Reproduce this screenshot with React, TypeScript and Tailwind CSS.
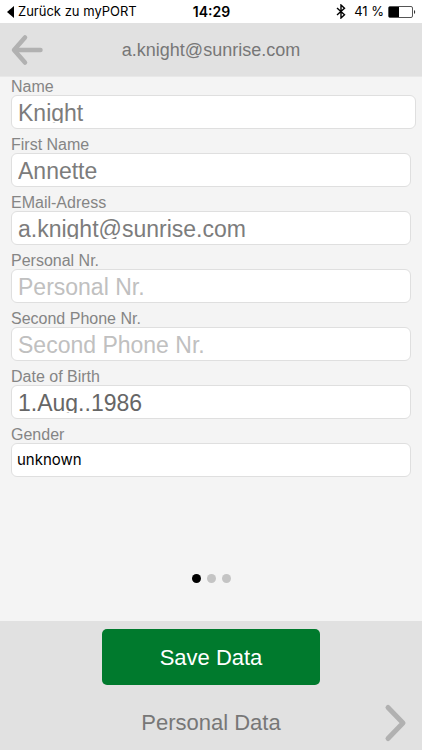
import { useState } from "react";
import { clsx } from "clsx";

type Field = {
  id: string;
  label: string;
  value: string;
  placeholder?: string;
  type?: string;
  wide?: boolean;
  dark?: boolean;
};

const FIELDS: Field[] = [
  { id: "name", label: "Name", value: "Knight", wide: true },
  { id: "firstName", label: "First Name", value: "Annette" },
  { id: "email", label: "EMail-Adress", value: "a.knight@sunrise.com", type: "email" },
  { id: "personalNr", label: "Personal Nr.", value: "", placeholder: "Personal Nr." },
  { id: "phone2", label: "Second Phone Nr.", value: "", placeholder: "Second Phone Nr.", type: "tel" },
  { id: "birth", label: "Date of Birth", value: "1.Aug..1986", dark: true },
];

function StatusBar() {
  return (
    <div className="grid grid-cols-[1fr_auto_1fr] items-center h-[23px] pl-[7px] pr-[6px] bg-white text-black text-[13px] font-['Inter','Roboto',sans-serif]">
      <button type="button" className="flex items-center gap-1 whitespace-nowrap">
        <svg width="7" height="12" viewBox="0 0 7 12" aria-hidden="true">
          <path d="M7 0v12L0 6z" fill="#000" />
        </svg>
        Zurück zu myPORT
      </button>
      <span className="text-sm font-semibold">14:29</span>
      <div className="flex items-center justify-end gap-1">
        <svg width="10" height="15" viewBox="0 0 10 15" fill="none" stroke="#000" strokeWidth="1.4" className="mr-1" aria-hidden="true">
          <path d="M1 4L8.5 10.8L5 14V1L8.5 4.2L1 11" />
        </svg>
        <span className="whitespace-nowrap">41 %</span>
        <svg width="28" height="12" viewBox="0 0 28 12" aria-hidden="true">
          <rect x="0.5" y="0.5" width="24" height="11" rx="1.5" fill="#fff" stroke="#555" />
          <rect x="1" y="1" width="10" height="10" fill="#000" />
          <path d="M26 4c1.6.6 1.6 3.4 0 4z" fill="#333" />
        </svg>
      </div>
    </div>
  );
}

function Header({ title }: { title: string }) {
  return (
    <header className="grid grid-cols-[34px_1fr_34px] items-center h-[54px] px-[10px] bg-[#e1e1e1] border-b border-[#e8e8e8]">
      <button type="button" aria-label="Back">
        <svg width="34" height="32" viewBox="0 0 34 32" fill="none" stroke="#b1b1b1" strokeWidth="4.5" strokeLinecap="round" strokeLinejoin="round">
          <path d="M15 3.5L4 16L15 28.5M4.5 16H30.5" />
        </svg>
      </button>
      <h1 className="text-center text-lg text-[#777]">{title}</h1>
    </header>
  );
}

function TextField({ field }: { field: Field }) {
  const [value, setValue] = useState(field.value);

  return (
    <div className={clsx("flex flex-col pl-[11px]", field.wide ? "pr-[6px]" : "pr-[11px]")}>
      <label htmlFor={field.id} className="h-[18px] text-base leading-[20px] text-[#858585]">
        {field.label}
      </label>
      {/* the input is shorter than its text, so descenders are cut */}
      <div className="flex items-start h-[34px] pt-[7px] px-[6px] rounded-md border border-[#dfdfdf] bg-white">
        <input
          id={field.id}
          type={field.type ?? "text"}
          value={value}
          placeholder={field.placeholder}
          onChange={(e) => setValue(e.target.value)}
          className={clsx(
            "w-full h-[20px] overflow-hidden outline-none text-[23px] leading-[20px] placeholder:text-[#c0c0c0]",
            field.dark ? "text-[#666]" : "text-[#7c7c7c]"
          )}
        />
      </div>
    </div>
  );
}

export default function App() {
  const [gender, setGender] = useState("unknown");

  return (
    <div className="flex flex-col min-h-screen bg-[#f4f4f4] font-['Liberation_Sans',Arial,sans-serif]">
      <StatusBar />
      <Header title="a.knight@sunrise.com" />

      <form id="personal" className="flex flex-col gap-[6px]" onSubmit={(e) => e.preventDefault()}>
        {FIELDS.map((field) => (
          <TextField key={field.id} field={field} />
        ))}
        <div className="flex flex-col px-[11px]">
          <label htmlFor="gender" className="h-[18px] text-base leading-[20px] text-[#858585]">
            Gender
          </label>
          <select
            id="gender"
            value={gender}
            onChange={(e) => setGender(e.target.value)}
            className="appearance-none w-full h-[34px] px-[5px] rounded-md border border-[#dfdfdf] bg-white text-[15px] text-black font-['Inter','Roboto',sans-serif]"
          >
            <option value="unknown">unknown</option>
            <option value="female">female</option>
            <option value="male">male</option>
          </select>
        </div>
      </form>

      {/* page dots */}
      <div className="flex justify-center gap-[6px] mt-auto pt-8 pb-[38px]">
        <span className="size-[9px] rounded-full bg-black" />
        <span className="size-[9px] rounded-full bg-[#c4c4c4]" />
        <span className="size-[9px] rounded-full bg-[#c4c4c4]" />
      </div>

      <footer className="flex flex-col items-center pt-2 bg-[#e1e1e1]">
        <button
          type="submit"
          form="personal"
          className="w-[218px] h-14 rounded-[5px] bg-[#007a2d] text-[22px] text-white"
        >
          Save Data
        </button>
        <div className="grid grid-cols-[28px_1fr_28px] items-center w-full h-[65px] pt-[10px] px-3">
          <span className="col-start-2 text-center text-[22px] text-[#777]">Personal Data</span>
          <button type="button" aria-label="Next">
            <svg width="28" height="40" viewBox="0 0 28 40" fill="none" stroke="#b1b1b1" strokeWidth="5" strokeLinecap="round" strokeLinejoin="round">
              <path d="M6 4.5L21 20L6 35.5" />
            </svg>
          </button>
        </div>
      </footer>
    </div>
  );
}
